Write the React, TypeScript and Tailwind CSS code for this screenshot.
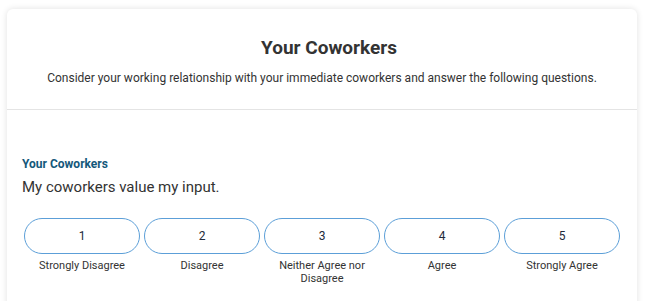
import React from "react";

const options = [
  { n: "1", label: "Strongly Disagree" },
  { n: "2", label: "Disagree" },
  { n: "3", label: "Neither Agree nor Disagree" },
  { n: "4", label: "Agree" },
  { n: "5", label: "Strongly Agree" },
];

export default function App() {
  return (
    <div
      className="w-[647px] h-[301px] bg-white overflow-hidden pt-[9px] pl-[7px]"
      style={{ fontFamily: "Roboto, 'Liberation Sans', sans-serif" }}
    >
      <div className="w-[630px] h-[320px] bg-white rounded-[6px] shadow-[0_0_6px_rgba(0,0,0,0.12)]">
        <div className="h-[101px] border-b border-[#e4e4e4] flex flex-col items-center pt-[28px]">
          <h1 className="pl-[14px] text-[19px] leading-[22px] font-bold text-[#333333]">Your Coworkers</h1>
          <p className="mt-[11px] text-[12px] leading-[16px] text-[#333333]">
            Consider your working relationship with your immediate coworkers and answer the following questions.
          </p>
        </div>
        <div className="px-[15px] pt-[47px]">
          <div className="text-[12px] leading-[14px] font-bold text-[#14587a]">Your Coworkers</div>
          <div className="mt-[7px] text-[15px] leading-[18px] text-[#333333]">My coworkers value my input.</div>
          <div className="mt-[22px] grid grid-cols-5 w-[600px]">
            {options.map((o) => (
              <div key={o.n} className="flex flex-col items-center px-[2px]">
                <div className="w-full h-[36px] rounded-full border border-[#5c9fd8] flex items-center justify-center text-[12px] text-[#222a3a]">
                  {o.n}
                </div>
                <div className="mt-[5px] text-[11px] leading-[13px] text-[#333333] text-center px-[8px]">
                  {o.label}
                </div>
              </div>
            ))}
          </div>
        </div>
      </div>
    </div>
  );
}
